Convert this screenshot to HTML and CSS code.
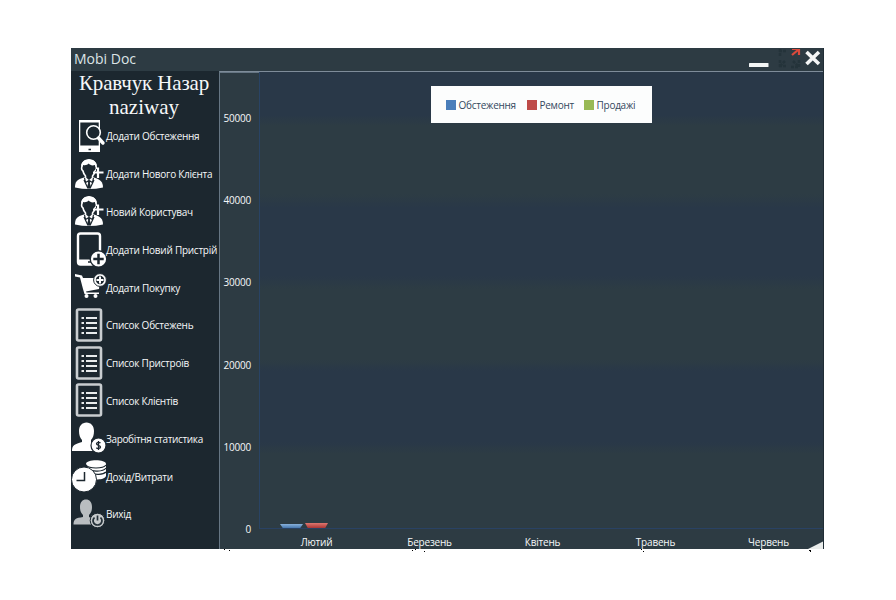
FILE: index.html
```
<!DOCTYPE html>
<html lang="uk">
<head>
<meta charset="utf-8">
<title>Mobi Doc</title>
<link rel="stylesheet" href="styles.css">
</head>
<body>
<svg class="defs" width="0" height="0" aria-hidden="true">
  <symbol id="person" viewBox="0 0 36 36">
    <path fill="#fff" d="M4 31.500c0-6 2-8 9-10h10c6 2 9 4 9 10q-14 3-28 0z"/>
    <path fill="#1c272f" stroke="#fff" stroke-width="1.600" d="M11 10.500c0-4 3-6 7-6s7 2 7 6c1 2 0 4-1 4.500-.500 3-1.500 4-2.500 5v2L18 25l-3.500-3v-2c-1-1-2-2-2.500-5-1-.500-2-2.500-1-4.500z"/>
    <path fill="#fff" d="M10.500 11.500c-1-5 3-8.500 7.500-8.500s8.500 3.500 7.500 8.500l-1.500-2.500c-3 1-5 0-6.500-1.500-1 1.500-3 2-5.500 1.500z"/>
    <path fill="none" stroke="#1c272f" stroke-width="1.200" d="M13.500 22l1 4.500 3.500-2 3.500 2 1-4.500M13 24l4 8.500M23 24l-4 8.500"/>
    <path fill="#1c272f" d="M16.500 25h3l-.7 2 1.200 4-2 2-2-2 1.200-4z"/>
    <path stroke="#1c272f" stroke-width="4" d="M27 13v8M24 17h8"/>
    <path stroke="#fff" stroke-width="2.200" d="M27 11.500v10.500M22 16.500h10.500"/>
  </symbol>
  <symbol id="list" viewBox="0 0 36 36">
    <rect x="6" y="2.500" width="24" height="31" rx="1.500" fill="none" stroke="#c9cdd0" stroke-width="2.600"/>
    <path stroke="#e8ebec" stroke-width="2" d="M15 11h11M15 16h11M15 21h11M15 26h11M10.500 11h2.500M10.500 16h2.500M10.500 21h2.500M10.500 26h2.500"/>
  </symbol>
</svg>
<div class="window">
  <header class="titlebar">
    <h1>Mobi Doc</h1>
    <svg class="controls" width="78" height="22" viewBox="746 49 78 22">
      <rect x="749" y="63" width="19.500" height="4" rx=".6" fill="#f2f5f5"/>
      <path fill="none" stroke="#24333a" stroke-width="2.500" stroke-dasharray="3 1" d="M779 51h7M780 49v7M779 66h7M780 60v7M799 60v7h-8M785 61l-4 4M793 61l5 5"/>
      <path fill="none" stroke="#dc4a3c" stroke-width="2.200" d="M792 49h7v6M792 55l6-5"/>
      <path stroke="#f5f6f6" stroke-width="3.600" d="M806.500 52l12.500 12M819 52l-12.500 12"/>
    </svg>
  </header>
  <div class="body">
    <nav class="sidebar">
      <div class="user"><div class="fullname">Кравчук Назар</div><div class="login">naziway</div></div>
      <a class="item"><svg viewBox="0 0 36 36"><path fill="#fff" d="M8 2h21v9h-1.300V4.500H9.300v23h18.400V23H29v11H8z"/><circle cx="22.500" cy="14.500" r="6.800" fill="#1c272f" stroke="#fff" stroke-width="1.600"/><path stroke="#fff" stroke-width="3.400" stroke-linecap="round" d="M27.500 20l4.500 5"/><path stroke="#1c272f" stroke-width="1.500" d="M17.500 31.500h2.500"/></svg><span>Додати Обстеження</span></a>
      <a class="item"><svg><use href="#person"/></svg><span>Додати Нового Клієнта</span></a>
      <a class="item"><svg><use href="#person"/></svg><span>Новий Користувач</span></a>
      <a class="item"><svg viewBox="0 0 36 36"><rect x="7" y="2.500" width="22" height="31" rx="2.500" fill="none" stroke="#fff" stroke-width="2.400"/><path fill="#fff" d="M7 28.500h14l2 5H7z"/><path stroke="#1c272f" stroke-width="1.500" d="M17 31h3"/><circle cx="27.500" cy="28" r="8.300" fill="#fff" stroke="#1c272f" stroke-width="1.400"/><path stroke="#1c272f" stroke-width="2.500" d="M27.500 22.800v10.400M22.300 28h10.400"/></svg><span>Додати Новий Пристрій</span></a>
      <a class="item"><svg viewBox="0 0 36 36"><path fill="#fff" d="M4 5l7 1.500 1 2.500H29l-1 11-13 2.500.5 1H28V25H13.500L12 20 9 8.500 4 7.500z"/><circle cx="15.500" cy="27" r="2" fill="#fff"/><circle cx="24.500" cy="27" r="2" fill="#fff"/><circle cx="29" cy="11" r="6.400" fill="#fff" stroke="#1c272f"/><circle cx="29" cy="11" r="4.200" fill="#1c272f"/><path stroke="#fff" stroke-width="2" d="M29 7.500v7M25.500 11h7"/></svg><span>Додати Покупку</span></a>
      <a class="item"><svg><use href="#list"/></svg><span>Список Обстежень</span></a>
      <a class="item"><svg><use href="#list"/></svg><span>Список Пристроїв</span></a>
      <a class="item"><svg><use href="#list"/></svg><span>Список Клієнтів</span></a>
      <a class="item"><svg viewBox="0 0 36 36"><path fill="#fff" d="M8 11c0-5 3-8.500 7.500-8.500S23 6 23 11c0 4-1 7-3 9v3l5 3v5H1c0-6 3-7 10-9v-2c-2-2-3-5-3-9z"/><circle cx="27.500" cy="25.500" r="7.500" fill="#fff" stroke="#1c272f" stroke-width="1.200"/><path fill="none" stroke="#1c272f" stroke-width="1.300" d="M29.500 23c-1-1-4-1-4 .8 0 2 4 1.200 4 3.200 0 1.800-3 1.800-4.200.7M27.500 21v9"/></svg><span class="tight">Заробітня статистика</span></a>
      <a class="item"><svg viewBox="0 0 36 36"><path fill="#fff" d="M15 6c0-5 20-5 20 0v12c-1 3-7 4-12 3z"/><path fill="none" stroke="#1c272f" stroke-width="1.200" d="M15 7c3 4 17 4 20 0M17 11c4 3 15 3 18-1M20 15c4 2 12 2 15-1"/><circle cx="13" cy="21.500" r="12.500" fill="#fff" stroke="#1c272f"/><path fill="none" stroke="#1c272f" stroke-width="1.500" d="M13.500 14V22.500H5.500"/></svg><span>Дохід/Витрати</span></a>
      <a class="item"><svg viewBox="0 0 36 36"><path fill="#b9bdc0" d="M9 11c0-5 2.500-7.500 6-7.500s6 2.500 6 7.500c0 4-1 6-3 8v2l6 3v4.500H2.500C2.500 23 5 22 12 21v-2c-2-2-3-4-3-8z"/><circle cx="26.500" cy="24.500" r="7.300" fill="#c6cacc" stroke="#1c272f"/><path fill="none" stroke="#26323a" stroke-width="1.700" d="M23.500 21.500c-3 3-1 7.500 3 7.500s6-4.500 3-7.500M26.500 19.500v5"/></svg><span>Вихід</span></a>
    </nav>
    <main class="chart">
      <div class="yaxis"><span>50000</span><span>40000</span><span>30000</span><span>20000</span><span>10000</span><span>0</span></div>
      <div class="plot">
        <div class="legend"><i class="blue"></i><span class="g1">Обстеження</span><i class="red"></i><span class="g2">Ремонт</span><i class="green"></i><span class="g3">Продажі</span></div>
        <div class="bars"><b class="bar blue-bar"></b><b class="bar red-bar"></b></div>
      </div>
      <div class="corner"></div>
      <div class="xaxis"><span>Лютий</span><span>Березень</span><span>Квітень</span><span>Травень</span><span>Червень</span></div>
      <svg class="grip" width="17" height="8" viewBox="0 0 17 8"><path fill="#e9eceb" d="M1 8L17 0v8z"/></svg>
    </main>
  </div>
</div>
<svg class="specks" width="753" height="3" viewBox="71 549 753 3"><path fill="#000" d="M224 549h1v1h-1zM229 550h1v1h-1zM412 550h1v1h-1zM415 549h1v1h-1zM424 551h1v1h-1zM641 549h1v1h-1zM643 551h1v1h-1zM760 549h1v1h-1zM809 550h2v2h-1v-1h-1z"/></svg>
</body>
</html>
```
FILE: styles.css
```
* { box-sizing: border-box; }
body { margin: 0; padding: 48px 72px 0 71px; background: #fff; font-family: "Open Sans", "Noto Sans", sans-serif; color: #f6f8f9; }
.defs { position: absolute; }
.window { width: 753px; height: 501px; background: #2d3b43; border-right: 1px solid #202d35; overflow: hidden; }
.titlebar { height: 23px; display: flex; justify-content: space-between; padding-left: 3px; }
h1 { margin: 0; font-size: 14px; line-height: 22px; font-weight: 400; color: #dce4e6; }
.controls { margin-top: 1px; margin-right: -1px; }
.body { display: flex; height: 478px; }
.sidebar { flex: none; width: 148px; background: #1c272f; }
.user { height: 46px; font-family: "Liberation Serif", serif; font-size: 21px; line-height: 24px; text-align: center; white-space: nowrap; padding-right: 2px; }
.fullname, .login { height: 24px; }
.fullname { letter-spacing: -.15px; }
.item { display: flex; align-items: center; height: 37.8px; font-size: 10px; white-space: nowrap; letter-spacing: -.26px; }
.item svg { width: 36px; height: 36px; flex: none; margin-right: -1px; }
.item span { line-height: 14px; margin-top: 1px; }
.item .tight { letter-spacing: -.35px; }
.chart { position: relative; flex: 1; min-width: 0; display: grid; grid-template-columns: 39px minmax(0, 1fr); grid-template-rows: 457px 20px; border-top: 1px solid #7e8c99; border-left: 1px solid #667684; }
.yaxis { display: grid; grid-template-rows: repeat(6, 82.3px); padding-top: 3.5px; text-align: right; padding-right: 8px; font-size: 10px; letter-spacing: -.2px; border-top: 1px solid #667684; }
.yaxis span { align-self: center; line-height: 14px; }
.plot { display: flex; flex-direction: column; justify-content: space-between; align-items: center; border-left: 1px solid #294364; border-bottom: 1px solid #294264; background: linear-gradient(#293848 0 43px, #2d3c44 54px 122px, #293848 136px 204px, #2d3c44 217px 288px, #293848 299px 370px, #2d3c44 382px); }
.legend { width: 221px; height: 37px; margin-top: 14px; margin-right: 1px; padding-left: 15px; display: flex; align-items: center; background: #fcfdfd; color: #34485d; font-size: 10px; letter-spacing: -.26px; }
.legend i { width: 10px; height: 10px; margin-right: 3px; }
.legend span { white-space: nowrap; line-height: 14px; margin-top: 1px; }
.g1 { width: 68px; }
.g2 { width: 44px; }
.blue { background: #4a7ebb; }
.red { background: #be4b48; }
.green { background: #98b954; }
.bars { align-self: flex-start; display: flex; align-items: flex-end; gap: 2px; margin-left: 20px; }
.bar { width: 23px; clip-path: polygon(0 0, 100% 0, 88% 100%, 12% 100%); }
.blue-bar { height: 4px; background: linear-gradient(#89b2dc, #4778ae); }
.red-bar { height: 5px; background: linear-gradient(#df7770, #a93534); }
.xaxis { display: grid; grid-template-columns: repeat(5, 113px); font-size: 10px; letter-spacing: -.2px; line-height: 14px; text-align: center; padding: 6px 0 0 1px; }
.grip { position: absolute; right: -1px; bottom: 0; }
.specks { display: block; }
```
